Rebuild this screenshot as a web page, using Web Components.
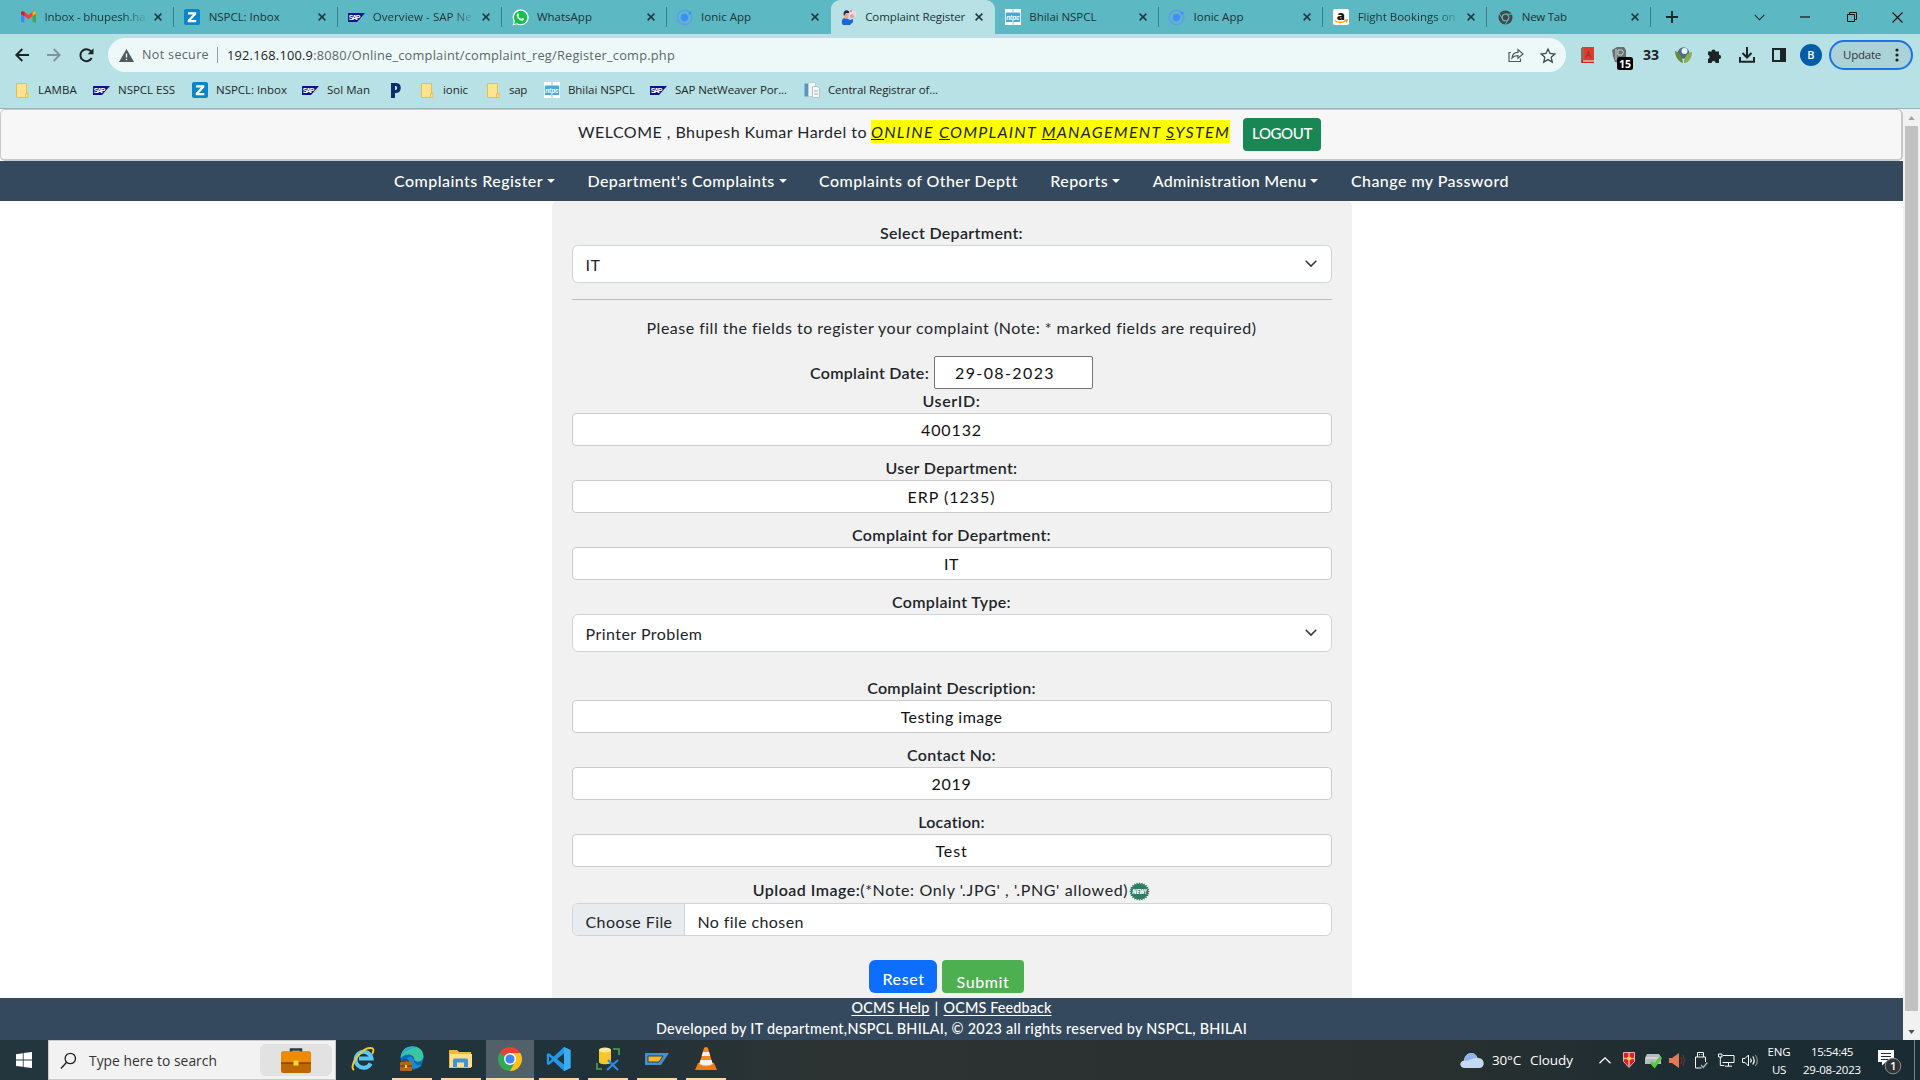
<!DOCTYPE html>
<html lang="en">
<head>
<meta charset="utf-8">
<title>Complaint Register</title>
<style>
html,body{margin:0;height:100%;overflow:hidden;background:#fff}
</style>
</head>
<body>
<desktop-screen></desktop-screen>
<script>
const UI='"Open Sans","Noto Sans",sans-serif';
const BODY='Lato,"Open Sans",sans-serif';
const define=(name,html,after)=>customElements.define(name,class extends HTMLElement{
  constructor(){super();this.attachShadow({mode:'open'})}
  connectedCallback(){
    if(this.shadowRoot.childNodes.length)return;
    const t=document.createElement('template');
    t.innerHTML=typeof html==='function'?html(this):html;
    this.shadowRoot.append(t.content.cloneNode(true));
    if(after)after(this);
  }
});
const S=(w,h,vb,body)=>`<svg width="${w}" height="${h}" viewBox="${vb}" fill="none">${body}</svg>`;
const SAP=S(17,9,'0 0 17 9','<path d="M0 0h17L9 9H0z" fill="#10128a"/><text x=".8" y="7.2" font-family="Liberation Sans" font-size="7" font-weight="700" textLength="11.5" fill="#fff">SAP</text>');
const Z=S(16,16,'0 0 16 16','<rect width="16" height="16" rx="2" fill="#0a85c7"/><path d="M4 3.2h8.3v2L7 11h5.3v2.2H3.7v-2L9 5.4H4z" fill="#fff"/>');
const ION=S(17,17,'0 0 17 17','<circle cx="8.5" cy="8.5" r="7.2" stroke="#5b9df0" stroke-width="1.4"/><circle cx="8.5" cy="8.5" r="3.7" fill="#3f8cff"/><circle cx="14" cy="4" r="1.6" fill="#3f8cff"/>');
const NTPC=S(16,16,'0 0 16 16','<rect width="16" height="16" fill="#fff"/><rect x=".8" y="3.500" width="14.400" height="9.500" rx="1" fill="#46a9d8"/><text x="1.200" y="10.600" font-family="Liberation Sans" font-size="7.500" font-style="italic" font-weight="700" textLength="13.500" lengthAdjust="spacingAndGlyphs" fill="#fff">ntpc</text><path d="M8 0v3.500M8 12.500V16" stroke="#8cc9e6"/>');
const ICONS={
 gmail:S(15,12,'0 0 15 12','<path d="M0 2v9.2h3.4V4.5z" fill="#4285f4"/><path d="M15 2v9.2h-3.4V4.5z" fill="#34a853"/><path d="M0 2.4C0 .2 2-.4 3.4.8L7.5 4l4.1-3.2C13-.4 15 .2 15 2.4L7.5 8.2z" fill="#ea4335"/><path d="M0 2.4C0 1 .8.3 1.7.2l1.7 1v3.7L0 2.8z" fill="#c5221f"/><path d="M15 2.4C15 1 14.200.3 13.3.2l-1.700 1v3.7L15 2.8z" fill="#fbbc04"/>'),
 z:Z,sap:SAP,ionic:ION,ntpc:NTPC,
 wa:S(17,17,'0 0 17 17','<path d="M.5 16.5l1.200-4.2A8 8 0 1 1 4.700 15.300z" fill="#fff"/><path d="M2.100 15l.8-3a6.700 6.700 0 1 1 2.200 2.200z" fill="#12c24b"/><path d="M5.300 4.600c.8-.8 1.300-.5 1.700 1.200.1.500-.8 1-.6 1.400.6 1.200 1.500 2 2.700 2.500.5.100 1-.9 1.400-.8 1.600.7 1.700.9 1.200 1.900-.8 1.400-3.200 1-5.200-.8S4.300 6 5.300 4.600z" fill="#fff"/>'),
 person:S(16,16,'0 0 16 16','<path d="M2 16c-3-3 0-8 3-7l4 2 3-1v3l-3 3z" fill="#1767d8"/><path d="M3 8c1-3 2-5 5-5l-1 6-3 1z" fill="#f6a77e"/><path d="M3 7C1 1 7-1 9 4L5 4z" fill="#1a2260"/><rect x="8" y="2" width="7" height="4" rx="2" fill="#f9d5e6"/><circle cx="11" cy="7" r="2" fill="#ff8fa3"/><circle cx="14" cy="6" r="1.300" fill="#c7f5bd"/><circle cx="10" cy="2" r="1" fill="#ff6a6a"/>'),
 amazon:S(16,16,'0 0 16 16','<rect width="16" height="16" rx="2" fill="#fff"/><text x="3.800" y="10.700" font-family="Open Sans" font-weight="800" font-size="13" fill="#111">a</text><path d="M1.500 11.500q6 4 11.500 0M11.500 11.500l2.500-.5-.5 2.500" stroke="#f90" stroke-width="1.400"/>'),
 chromegray:S(15,15,'0 0 15 15','<circle cx="7.500" cy="7.500" r="7" fill="#42474c"/><circle cx="7.500" cy="7.500" r="3.300" fill="#42474c" stroke="#5cb8c2" stroke-width="1.200"/><path d="M7.500 4.200H14M4.700 9.200L1.400 3.800M10.300 9.200L7.300 14.500" stroke="#5cb8c2"/>'),
 close:S(8,8,'0 0 8 8','<path d="M.6.6l6.800 6.800M7.400.6L.6 7.400" stroke="#20393d" stroke-width="1.500"/>'),
 plus:S(12,12,'0 0 12 12','<path d="M6 0v12M0 6h12" stroke="#17292c" stroke-width="1.900"/>'),
 down:S(11,7,'0 0 11 7','<path d="M.7.8L5.500 5.800 10.300.8" stroke="#17292c" stroke-width="1.100"/>'),
 min:S(10,2,'0 0 10 2','<path d="M0 1h10" stroke="#111" stroke-width="1.200"/>'),
 restore:S(10,10,'0 0 10 10','<path d="M.5 2.500h7v7h-7zM2.500 2.500v-2h7v7h-2" stroke="#111"/>'),
 x:S(11,11,'0 0 11 11','<path d="M.5.5l10 10M10.500.5l-10 10" stroke="#111" stroke-width="1.100"/>'),
 back:S(14,14,'0 0 14 14','<path d="M14 7H1.500M7.300 1L1.300 7l6 6" stroke="#1d2426" stroke-width="1.900"/>'),
 fwd:S(14,14,'0 0 14 14','<path d="M0 7h12.500M6.700 1l6 6-6 6" stroke="#7b9698" stroke-width="1.800"/>'),
 reload:S(15,15,'0 0 15 15','<path d="M12.700 10A6 6 0 1 1 12 3.300" stroke="#1d2426" stroke-width="2"/><path d="M14.500.3v6H8.600z" fill="#1d2426"/>'),
 warn:S(15,13,'0 0 15 13','<path d="M7.500 0L15 13H0z" fill="#50595b"/><path d="M7.500 4.500v4M7.500 9.700v1.500" stroke="#edf9f9" stroke-width="1.400"/>'),
 share:S(16,14,'0 0 16 14','<path d="M3 4.500H1v9h11.500v-3" stroke="#50595b" stroke-width="1.200"/><path d="M4 10c.4-4 2.500-5.500 6-5.600V1.500L15 6l-5 4.300V7.600C7.300 7.500 5.600 8.200 4 10z" stroke="#50595b" stroke-width="1.200"/>'),
 star:S(16,15,'0 0 16 15','<path d="M8 1l2 4.500 4.900.5-3.700 3.300 1.100 4.800L8 11.600l-4.300 2.500 1.100-4.800L1.100 6 6 5.500z" stroke="#40494b" stroke-width="1.300"/>'),
 book:S(15,16,'0 0 15 16','<rect x="2" width="12" height="13" fill="#e03b2f"/><path d="M1 1h3v14H1z" fill="#9b6459"/><path d="M2 13h12v3H1z" fill="#c62820"/><path d="M3 13.400h11v1.200H3z" fill="#f5e4dc"/><text x="5.200" y="10.500" font-family="Open Sans" font-size="9" fill="#8b2d27">A</text>'),
 ext15:S(22,23,'0 0 22 23','<path d="M1 3l5-3h7l2 3v7l-4 2v5l-7-2-2-6z" fill="#65706f"/><path d="M5 2v11M7 3h4q3 2 0 5H7z" stroke="#ced5d4"/><rect x="6" y="10" width="16" height="13" rx="2.500" fill="#000"/><text x="8" y="20.500" font-family="Open Sans" font-weight="700" font-size="10.500" fill="#fff" textLength="12">15</text>'),
 plant:S(17,16,'0 0 17 16','<circle cx="8.500" cy="6" r="5.800" fill="#4e6c8a"/><circle cx="9.500" cy="4" r="3" fill="#e6f3f8"/><path d="M0 4c4 1 7 5 8 12C4 15 0 10 0 4z" fill="#648b36"/><path d="M17 5c-5 1-8 5-8 11 5 0 8-6 8-11z" fill="#8cad49"/>'),
 puzzle:S(16,15,'0 0 16 15','<path d="M1 3.500h3.500a2 2 0 1 1 4 0H12v3.300a2 2 0 1 1 0 4.200v4H8.600a2 2 0 0 0-4 0H1v-4a2.200 2.200 0 0 0 0-4.200z" fill="#1d2426"/>'),
 dl:S(16,16,'0 0 16 16','<path d="M8 0v10M3.500 6L8 10.500 12.500 6M1 10v4.700h14V10" stroke="#1d2426" stroke-width="2"/>'),
 side:S(14,14,'0 0 14 14','<rect x="1" y="1" width="12" height="12" stroke="#1d2426" stroke-width="2"/><path d="M8 0h6v14H8z" fill="#1d2426"/>'),
 b:S(22,22,'0 0 22 22','<circle cx="11" cy="11" r="11" fill="#045da6"/><text x="7.300" y="15" font-family="Open Sans" font-weight="600" font-size="11" fill="#fff">B</text>'),
 dots:S(4,14,'0 0 4 14','<g fill="#1d2426"><circle cx="2" cy="2" r="1.600"/><circle cx="2" cy="7" r="1.600"/><circle cx="2" cy="12" r="1.600"/></g>'),
 folder:S(13,15,'0 0 13 15','<path d="M.5.5h10v9.500h1.500v4.500H.5z" fill="#ffe392" stroke="#e6be4d"/><path d="M9.500 14v-3.500h2" stroke="#e6be4d"/>'),
 p:S(10,15,'0 0 10 15','<path d="M0 0h5.500C11.500 0 11 10 5.500 10H4v5H0zM4 3v4h1c1.500 0 1.500-4 0-4z" fill="#0b2d6e" fill-rule="evenodd"/>'),
 doc:S(16,16,'0 0 16 16','<path d="M.5 1.500h5v13h-5z" fill="#5295c8"/><path d="M4.500.5h7v14h-7z" fill="#f2f4f5" stroke="#c3cccf"/><path d="M8.500 4.500h5l2 2v9h-7z" fill="#f7f8f9" stroke="#b7bfc2"/><path d="M10 9h4M10 12h4" stroke="#9eabb0"/>'),
 win:S(16,16,'0 0 16 16','<path d="M0 2.200L6.800 1.200v6.400H0zM7.600 1.100L16 0v7.600H7.600zM0 8.400h6.800v6.400L0 13.900zM7.600 8.400H16V16l-8.400-1.100z" fill="#fff"/>'),
 search:S(17,17,'0 0 17 17','<circle cx="10.300" cy="6.500" r="5.200" stroke="#222" stroke-width="1.300"/><path d="M6.600 10.300L1 16.500" stroke="#222" stroke-width="1.400"/>'),
 brief:S(30,25,'0 0 30 25','<path d="M10 4V1.500h10V4" stroke="#30353a" stroke-width="2.500"/><rect y="3.500" width="30" height="21.500" rx="2" fill="#bd6705"/><path d="M0 5.500q0-2 2-2h26q2 0 2 2V15H0z" fill="#ee8a06"/><path d="M0 15h30" stroke="#84430d" stroke-width="1.500"/><rect x="12.500" y="12.500" width="5" height="5" fill="#fed927"/>'),
 ie:S(24,24,'0 0 24 24','<path d="M19.700 16.500A8 8 0 1 1 20.500 11.500H8" stroke="#57c7f4" stroke-width="4"/><path d="M3 23C-3 19 11 0 20 1c4 0 2 5 1 6" stroke="#f7c72b" stroke-width="1.900"/>'),
 edge:S(26,26,'0 0 26 26','<circle cx="13" cy="12" r="11.500" fill="#0e69b5"/><path d="M1.700 12C2-3.500 24-3 24.500 10c0 6-7 7-9 4 0-6-8-8-13.800-2z" fill="#39c6a0"/><path d="M2 10C4 3 12-1 18 2c-7 0-13 4-16 8z" fill="#2da3df"/><path d="M15 14c-5-8-10 1-6 6 4 4 11 3 14-1-4 1-8-1-8-5z" fill="#1b8bd1"/><rect x="1" y="16" width="12" height="9" rx="1" fill="#b36516"/><path d="M4 16v-2h5v2M1 20h12" stroke="#5c3510"/><path d="M6 19h2v3H6z" fill="#ffd02b"/>'),
 explorer:S(23,20,'0 0 23 20','<path d="M0 1h8l2 2h12v16H0z" fill="#f3b73f"/><path d="M1 5h22v13H1z" fill="#ffe08a"/><path d="M4 18v-7q0-1.500 1.500-1.500h12q1.500 0 1.500 1.500v7h-4v-4.500H8V18z" fill="#3f94d5"/>'),
 chrome:S(24,24,'0 0 24 24','<path d="M12 12L1.600 6A12 12 0 0 1 22.400 6z" fill="#e94235"/><path d="M12 12V6h10.400A12 12 0 0 1 12 24z" fill="#fbc116"/><path d="M12 12l5 3-5 9A12 12 0 0 1 1.600 6z" fill="#34a853"/><circle cx="12" cy="12" r="6" fill="#fff"/><circle cx="12" cy="12" r="4.600" fill="#4285f4"/>'),
 code:S(25,24,'0 0 25 24','<path d="M18 0l6.500 3v18L18 24 7.500 14.300 2.800 18 .8 17V7l2-1 4.700 3.700zM18 6.500L11 12l7 5.500zM3 9.200v5.600L6 12z" fill="#2398e6" fill-rule="evenodd"/><path d="M18 0l6.500 3v18L18 24z" fill="#39adf2"/>'),
 sql:S(24,24,'0 0 24 24','<path d="M3 3v12c0 3 12 3 12 0V3z" fill="#f6c728"/><ellipse cx="9" cy="3" rx="6" ry="2.500" fill="#ffe89a"/><path d="M17 2h6v6M1 16v6h5" stroke="#4da64c" stroke-width="1.600"/><path d="M11 23l11-10M12 13l10 10" stroke="#2b8be0" stroke-width="2.200"/>'),
 saplogon:S(24,14,'0 0 24 14','<path d="M0 1h24l-8 12H0z" fill="#4192ce"/><path d="M3 4h15l-4 6H3z" fill="#f7b62c" stroke="#31424b"/>'),
 vlc:S(22,24,'0 0 22 24','<path d="M3 16h16l3 7H0z" fill="#f07a12"/><path d="M9 1q2-2 4 0l5 17q-7 4-14 0z" fill="#f58a25"/><path d="M8 5h6l1.200 4H6.700zM5.500 13h11l1.200 4q-6.500 3-13.300 0z" fill="#f8f2ec"/>'),
 cloud:S(24,16,'0 0 24 16','<path d="M5 16C-1 16-1 9 4 8.500 5 0 15-2 17.500 6 25 5 26 16 19 16z" fill="#c5d9f7"/><path d="M4 8.500C5 0 15-2 17.500 6 13 5 10 10 4 8.500z" fill="#91b3ed"/>'),
 up:S(12,7,'0 0 12 7','<path d="M.5 6.200L6 .8l5.500 5.400" stroke="#fff" stroke-width="1.300"/>'),
 shield:S(12,16,'0 0 12 16','<path d="M.5.500h11v9L6 15.500.5 9.500z" fill="#e31b20" stroke="#eaa"/><path d="M6 0v15M0 6.500h12" stroke="#c7bcbb" stroke-width="1.500"/><circle cx="6" cy="6.500" r="2.100" fill="#ffcb28"/>'),
 device:S(17,15,'0 0 17 15','<path d="M2 1h12l2 3v7H0V5z" fill="#b7bbbc"/><path d="M1 5h15" stroke="#eee"/><path d="M6 9l3.500 4L16 4" stroke="#55cb40" stroke-width="3"/>'),
 ospk:S(16,15,'0 0 16 15','<path d="M0 5h3l7-5v15l-7-5H0z" fill="#e27b55"/><path d="M12 4q2 3 0 7M14 2q3 5 0 11" stroke="#703a2c"/>'),
 usb:S(13,17,'0 0 13 17','<path d="M2.500 5V.500h6V5M.500 5h10v5M.500 5v11h6M4 2.500h.8M6.500 2.500h.8" stroke="#fff"/><path d="M6 13l2.300 2.500 4-5" stroke="#aeb9bc" stroke-width="1.300"/>'),
 net:S(17,14,'0 0 17 14','<path d="M5 2.500h11v7H4.500M10.500 9.500V13M7 13.200h7M.500 1h3.500v3H.500zM2.300 4v8.500h4" stroke="#fff"/>'),
 vol:S(17,13,'0 0 17 13','<path d="M.500 4.500H3l3.500-3.500v11L3 8.500H.500z" stroke="#fff"/><path d="M8.500 4.500q1.500 2 0 4M10.700 2.500q3 4 0 8" stroke="#fff" stroke-width="1.200"/><path d="M13.300 1q4 5.500 0 11" stroke="#7f8a8d" stroke-width="1.200"/>'),
 note:S(25,25,'0 0 25 25','<path d="M1 1h16v12H9l-4 3.500V13H1z" fill="#fff"/><path d="M4 4.500h10M4 7.500h10M4 10.500h7" stroke="#1d2d33" stroke-width="1.200"/><circle cx="16" cy="17" r="7.800" fill="#2f3436" stroke="#8a9090"/><text x="13.100" y="21.200" font-family="Open Sans" font-weight="600" font-size="11.500" fill="#fff">1</text>'),
 caret:S(8,4,'0 0 8 4','<path d="M0 0h8L4 4z" fill="#fff"/>'),
 sel:S(12,8,'0 0 12 8','<path d="M1.200 1.200L6 6l4.800-4.800" stroke="#343a40" stroke-width="1.600" stroke-linecap="round"/>'),
 badge:(()=>{let p='';for(let i=0;i<48;i++){const a=i*Math.PI/24,r=i%2?.82:1;p+=(i?'L':'M')+(10.500+10.400*r*Math.cos(a)).toFixed(1)+' '+(9.500+9.300*r*Math.sin(a)).toFixed(1)}
  return S(21,19,'0 0 21 19',`<path d="${p}z" fill="#2f7d63"/><text x="3.300" y="12" font-family="Open Sans" font-weight="800" font-style="italic" font-size="6" textLength="14" lengthAdjust="spacingAndGlyphs" fill="#fff">NEW!</text>`)})(),
 sbup:S(7,4,'0 0 8 5','<path d="M4 0l4 5H0z" fill="#a3a3a3"/>'),
 sbdn:S(7,4,'0 0 8 5','<path d="M0 0h8L4 5z" fill="#505050"/>')
};
/* Icon centred in a box of a given width */
define('ui-icon',e=>`<style>:host{display:inline-flex;flex:none;justify-content:center;align-items:center;width:${e.getAttribute('w')||'auto'}${e.hasAttribute('w')?'px':''}}svg{display:block;overflow:visible}</style>${ICONS[e.getAttribute('name')]}`);
/* Text run that tracks its letters to a given width */
define('fit-text','<style>:host{display:inline-block;flex:none;white-space:pre}</style><slot></slot>',e=>{
  const w=+e.getAttribute('w');
  if(e.hasAttribute('size'))e.style.fontSize=e.getAttribute('size')+'px';
  const n=[...e.textContent].length,nat=e.getBoundingClientRect().width;
  if(w&&nat)e.style.letterSpacing=((w-nat)/n)+'px';
});
const T=(t,w,x='')=>`<fit-text w="${w}" ${x}>${t}</fit-text>`;
const I=(n,w,x='')=>`<ui-icon name="${n}" ${w?`w="${w}"`:''} ${x}></ui-icon>`;

define('browser-tab',e=>`<style>:host{display:flex;box-sizing:border-box;width:164.150px;height:34px;align-items:center;padding:0 11px 0 8px;flex:none}
.t{margin-left:6.500px;flex:1}i{width:1px;height:20px;background:#367f88;flex:none;margin-left:11px;margin-right:-11px}
:host([active]){background:#b8e1e5;border-radius:9px 9px 0 0}:host([active]) i,:host([nosep]) i{visibility:hidden}
:host([fade]) .t{-webkit-mask:linear-gradient(90deg,#000 78px,transparent 103px);mask:linear-gradient(90deg,#000 78px,transparent 103px)}</style>
${I(e.getAttribute('icon'),20)}<div class="t">${T(e.getAttribute('label'),e.getAttribute('w'))}</div>${I('close',8)}<i></i>`);

const tabs=[['gmail','Inbox - bhupesh.ha',101,'fade'],['z','NSPCL: Inbox',71,''],['sap','Overview - SAP Ne',99,'fade'],['wa','WhatsApp',55,''],['ionic','Ionic App',50,'nosep'],['person','Complaint Register',100,'active'],['ntpc','Bhilai NSPCL',67,''],['ionic','Ionic App',50,''],['amazon','Flight Bookings on',98,'fade'],['chromegray','New Tab',45,'']];
define('tab-strip',`<style>:host{display:flex;height:34px;background:#5cb8c2;padding-left:10px;align-items:center;font:11.500px/16px ${UI};color:#1c3337}
.w{margin-left:auto;display:flex;align-items:center;height:28px}</style>
${tabs.map(t=>`<browser-tab icon="${t[0]}" label="${t[1]}" w="${t[2]}" ${t[3]}></browser-tab>`).join('')}
${I('plus',42)}<div class="w">${I('down',44)}${I('min',48)}${I('restore',45)}${I('x',46)}</div>`);

define('address-bar',`<style>:host{display:flex;height:42px;align-items:center;box-sizing:border-box;font:13px/18px ${UI};padding-left:6px}
.pill{display:flex;align-items:center;box-sizing:border-box;flex:none;width:1458px;height:34px;border-radius:17px;background:#edf9f9;margin:0 5px 0 6px;padding:0 2px 0 11px}
.sec{color:#5b6466;margin-left:8px}.sep{width:1px;height:16px;background:#90a0a2;margin:0 9px 0 8px}.url{color:#5d6668}.url b{font-weight:400;color:#1d2426}
.e{margin-left:auto;display:flex}.n{width:32px;text-align:center;font-weight:700;font-size:14px;color:#1d2426}
.up{display:flex;align-items:center;box-sizing:border-box;height:30px;width:84px;border:2px solid #1a73e8;border-radius:15px;background:#abd2d6;margin-left:2px;padding-left:12px;font-size:11.500px;color:#2b3b3d}</style>
${I('back',32)}${I('fwd',32)}${I('reload',32)}
<div class="pill">${I('warn',15)}${T('Not secure',67,'class="sec" size="12.5"')}<span class="sep"></span>${T('<b>192.168.100.9</b>:8080/Online_complaint/complaint_reg/Register_comp.php',448,'class="url" size="12.8"')}<span class="e">${I('share',32)}${I('star',32)}</span></div>
${I('book',32)}${I('ext15',34,'style="margin:7px -4px 0 2px"')}<span class="n">${T('33',16)}</span>${I('plant',32)}${I('puzzle',32)}${I('dl',32)}${I('side',32)}${I('b',32)}
<div class="up">${T('Update',38)}${I('dots',32)}</div>`);

const marks=[['folder',22,38,39,'LAMBA'],['sap',101,118,57,'NSPCL ESS'],['z',200,216,71,'NSPCL: Inbox'],['sap',310,327,43,'Sol Man'],['p',396,408,0,''],['folder',427,443,25,'ionic'],['folder',493,509,18,'sap'],['ntpc',552,568,67,'Bhilai NSPCL'],['sap',658,675,112,'SAP NetWeaver Por...'],['doc',812,828,110,'Central Registrar of...']];
let pen=0;
define('bookmark-bar',`<style>:host{display:flex;height:33px;align-items:center;box-sizing:border-box;padding-bottom:4px;font:11.500px/16px ${UI};color:#20292b;border-bottom:1px solid #8fb5b8}</style>
${marks.map(m=>{const l=m[1]-11,g=l-pen,h=m[2]-m[1]-11;pen=m[2]+m[3];return I(m[0],22,`style="margin-left:${g}px;margin-right:${h}px"`)+(m[4]?T(m[4],m[3]):'')}).join('')}`);

define('browser-chrome',`<style>:host{display:block;height:109px;background:#b8e1e5}</style><tab-strip></tab-strip><address-bar></address-bar><bookmark-bar></bookmark-bar>`);

define('welcome-bar',`<style>:host{display:flex;flex:none;box-sizing:border-box;height:52px;border:1px solid #cbc8c9;border-width:1px 2px 2px 1px;border-radius:5px;background:#f7f7f7;padding:8px 0 0 577px;align-items:flex-start;font-size:16px;line-height:23px;color:#212529}
.a,.y{margin-top:2px}.y{background:#ff0;font-style:italic;margin-left:4px}
.b{box-sizing:border-box;width:78px;height:33px;border-radius:4px;background:#198754;color:#fff;margin-left:13px;padding:4px 0 0 9px;font-size:15px;font-weight:500}</style>
${T('WELCOME , Bhupesh Kumar Hardel to',289,'class="a"')}${T('<u>O</u>NLINE <u>C</u>OMPLAINT <u>M</u>ANAGEMENT <u>S</u>YSTEM',359,'class="y"')}<div class="b">${T('LOGOUT',60)}</div>`);

define('nav-item',e=>`<style>:host{display:flex;align-items:center;gap:4px}</style>${T(e.getAttribute('label'),e.getAttribute('w'))}${e.hasAttribute('menu')?I('caret',8):''}`);
define('main-nav',`<style>:host{display:flex;flex:none;height:40px;background:#34495e;color:#fff;align-items:center;justify-content:center;gap:32.500px;font-size:16px;line-height:24px;font-weight:500}</style>
<nav-item label="Complaints Register" w="149" menu></nav-item><nav-item label="Department's Complaints" w="187" menu></nav-item><nav-item label="Complaints of Other Deptt" w="198"></nav-item><nav-item label="Reports" w="58" menu></nav-item><nav-item label="Administration Menu" w="154" menu></nav-item><nav-item label="Change my Password" w="158"></nav-item>`);

define('form-field',e=>{const k=e.getAttribute('kind')||'input';return `<style>:host{display:flex;flex-direction:column;align-items:stretch;margin-bottom:10px}
.l{height:24px;line-height:24px;display:flex;justify-content:center;align-items:center;font-weight:600;color:#212529}
.f{box-sizing:border-box;height:33px;border:1px solid #ccc;border-radius:4px;background:#fff;display:flex;align-items:center;justify-content:center;color:#111}
.select{height:38px;border-color:#ced4da;border-radius:6px;justify-content:space-between;padding:0 14px 0 13px;color:#212529}</style>
<div class="l">${T(e.getAttribute('label'),e.getAttribute('lw'))}</div>
<div class="f ${k}">${T(e.getAttribute('value'),e.getAttribute('vw'))}${k==='select'?I('sel',12):''}</div>`});
const F=(l,lw,v,vw,x='')=>`<form-field label="${l}" lw="${lw}" value="${v}" vw="${vw}" ${x}></form-field>`;
define('upload-field',`<style>:host{display:block;color:#212529}.l{display:flex;justify-content:center;align-items:center;height:26px;line-height:24px}.l b{font-weight:600}
.l ui-icon{margin:3px 0 0 1px}.f{display:flex;box-sizing:border-box;height:33px;border:1px solid #ced4da;border-radius:6px;background:#fff;overflow:hidden;line-height:24px}
.c{background:#e9ecef;border-right:1px solid #ced4da;padding:6px 11px 0 13px}.n{padding:6px 0 0 13px}</style>
<div class="l"><b>${T('Upload Image:',107.5)}</b>${T("(*Note: Only '.JPG' , '.PNG' allowed)",268)}${I('badge',21)}</div>
<div class="f"><div class="c">${T('Choose File',87)}</div><div class="n">${T('No file chosen',106)}</div></div>`);
define('date-row',`<style>:host{display:flex;justify-content:center;align-items:center;height:33px;gap:5px;color:#212529}b{font-weight:600}
.d{box-sizing:border-box;width:159px;height:33px;border:1px solid #767676;border-radius:2px;background:#fff;color:#111;padding:4px 0 0 20px;line-height:24px}</style>
<b>${T('Complaint Date:',119)}</b><div class="d">${T('29-08-2023',100)}</div>`);
define('action-row',`<style>:host{display:flex;padding:24px 0 0 297px;gap:5px;height:33px}
div{box-sizing:border-box;height:33px;color:#fff;line-height:24px;font-weight:500}.r{width:68px;background:#0d6efd;border-radius:6px;padding:7px 0 0 14px}.s{width:82px;background:#4caf50;border-radius:4px;padding:10px 0 0 15px}</style>
<div class="r">${T('Reset',42)}</div><div class="s">${T('Submit',53)}</div>`);
define('complaint-form',`<style>:host{display:block;flex:none;box-sizing:border-box;width:800px;height:797px;margin:0 auto;background:#f1f1f1;border-radius:5px 5px 0 0;padding:20px;font-size:16px}
hr{border:0;height:1px;background:#bcbcbd;margin:16px 0}.p{display:flex;justify-content:center;line-height:24px;height:24px;color:#212529;margin-bottom:16px}</style>
${F('Select Department:',143,'IT',15,'kind="select"')}<hr><div class="p">${T('Please fill the fields to register your complaint (Note: * marked fields are required)',609)}</div>
<date-row></date-row>
${F('UserID:',58,'400132',61)}${F('User Department:',132,'ERP (1235)',88)}${F('Complaint for Department:',199,'IT',15)}${F('Complaint Type:',119,'Printer Problem',117,'kind="select" style="margin-bottom:24px"')}
${F('Complaint Description:',169,'Testing image',102)}${F('Contact No:',89,'2019',40)}${F('Location:',67,'Test',32)}
<upload-field></upload-field><action-row></action-row>`);
define('page-footer',`<style>:host{display:block;height:42px;flex:none;box-sizing:border-box;background:#34495e;color:#fff;font-size:14.400px;line-height:20.500px;font-weight:500}div{display:flex;justify-content:center;gap:5px}.u{text-decoration:underline;text-underline-offset:2px}</style>
<div>${T('OCMS Help',78,'class="u"')}${T('|',4)}${T('OCMS Feedback',108,'class="u"')}</div><div>${T('Developed by IT department,NSPCL BHILAI, © 2023 all rights reserved by NSPCL, BHILAI',591)}</div>`);
define('scroll-bar',`<style>:host{display:flex;flex-direction:column;align-items:center;width:17px;background:#f1f1f1}ui-icon{height:17px}.t{width:13px;flex:1;background:#c1c1c1;margin-bottom:12px}</style>${I('sbup',17)}<div class="t"></div>${I('sbdn',17)}`);
define('web-page',`<style>:host{display:flex;height:931px;font-family:${BODY};background:#fff}main{flex:1;display:flex;flex-direction:column}</style>
<main><welcome-bar></welcome-bar><main-nav></main-nav><complaint-form></complaint-form><page-footer></page-footer></main><scroll-bar></scroll-bar>`);

define('task-app',e=>`<style>:host{display:flex;width:49.100px;height:40px;flex:none;justify-content:center}div{width:40px;height:40px;box-sizing:border-box;display:flex;align-items:center;justify-content:center;border-bottom:2px solid #fdd7ac}
:host([off]) div{border-color:transparent}:host([on]) div{width:48px;background:#52606a}</style><div>${I(e.getAttribute('icon'))}</div>`);
define('task-bar',`<style>:host{display:flex;height:40px;align-items:center;background:linear-gradient(90deg,#23363e 0,#20323a 30%,#2d3333 43%,#29302f 75%,#1d2d33 88%,#1a2b33);color:#fff;font:13px/17px ${UI}}
.s{display:flex;align-items:center;box-sizing:border-box;width:288px;height:40px;background:#f2f2f2;border:1px solid #c9c9c9;color:#333;padding:0 3px 0 11px}
.h{display:flex;justify-content:center;align-items:center;width:72px;height:32px;border-radius:6px;background:#e2e2e2;margin-left:auto}
.tray{margin-left:auto;display:flex;align-items:center}.c{display:flex;flex-direction:column;align-items:center;font-size:11.500px;height:36px;justify-content:space-around}
.line{width:1px;height:40px;background:#78848a;margin:0 5px 0 12px}</style>
${I('win',48)}<div class="s">${I('search',17)}${T('Type here to search',128,'size="13.8" style="margin-left:12px"')}<div class="h">${I('brief',30)}</div></div>
<task-app icon="ie" off style="margin-left:2px"></task-app><task-app icon="edge"></task-app><task-app icon="explorer"></task-app><task-app icon="chrome" on></task-app><task-app icon="code"></task-app><task-app icon="sql"></task-app><task-app icon="saplogon"></task-app><task-app icon="vlc"></task-app>
<div class="tray">${I('cloud',24)}${T('30°C',29,'size="13.5" style="margin-left:8px"')}${T('Cloudy',43,'size="13.5" style="margin:0 20px 0 9px"')}
${I('up',24)}${I('shield',24)}${I('device',24)}${I('ospk',24)}${I('usb',25)}${I('net',24)}${I('vol',24)}
<div class="c" style="width:24px;margin-left:5px">${T('ENG',23)}${T('US',14)}</div><div class="c" style="width:60px;margin-left:11px">${T('15:54:45',42)}${T('29-08-2023',58)}</div>
${I('note',25,'style="margin:3px 0 0 15px"')}<div class="line"></div></div>`);
define('desktop-screen',`<style>:host{display:block;width:1920px;height:1080px;overflow:hidden}</style><browser-chrome></browser-chrome><web-page></web-page><task-bar></task-bar>`);
</script>
</body>
</html>
